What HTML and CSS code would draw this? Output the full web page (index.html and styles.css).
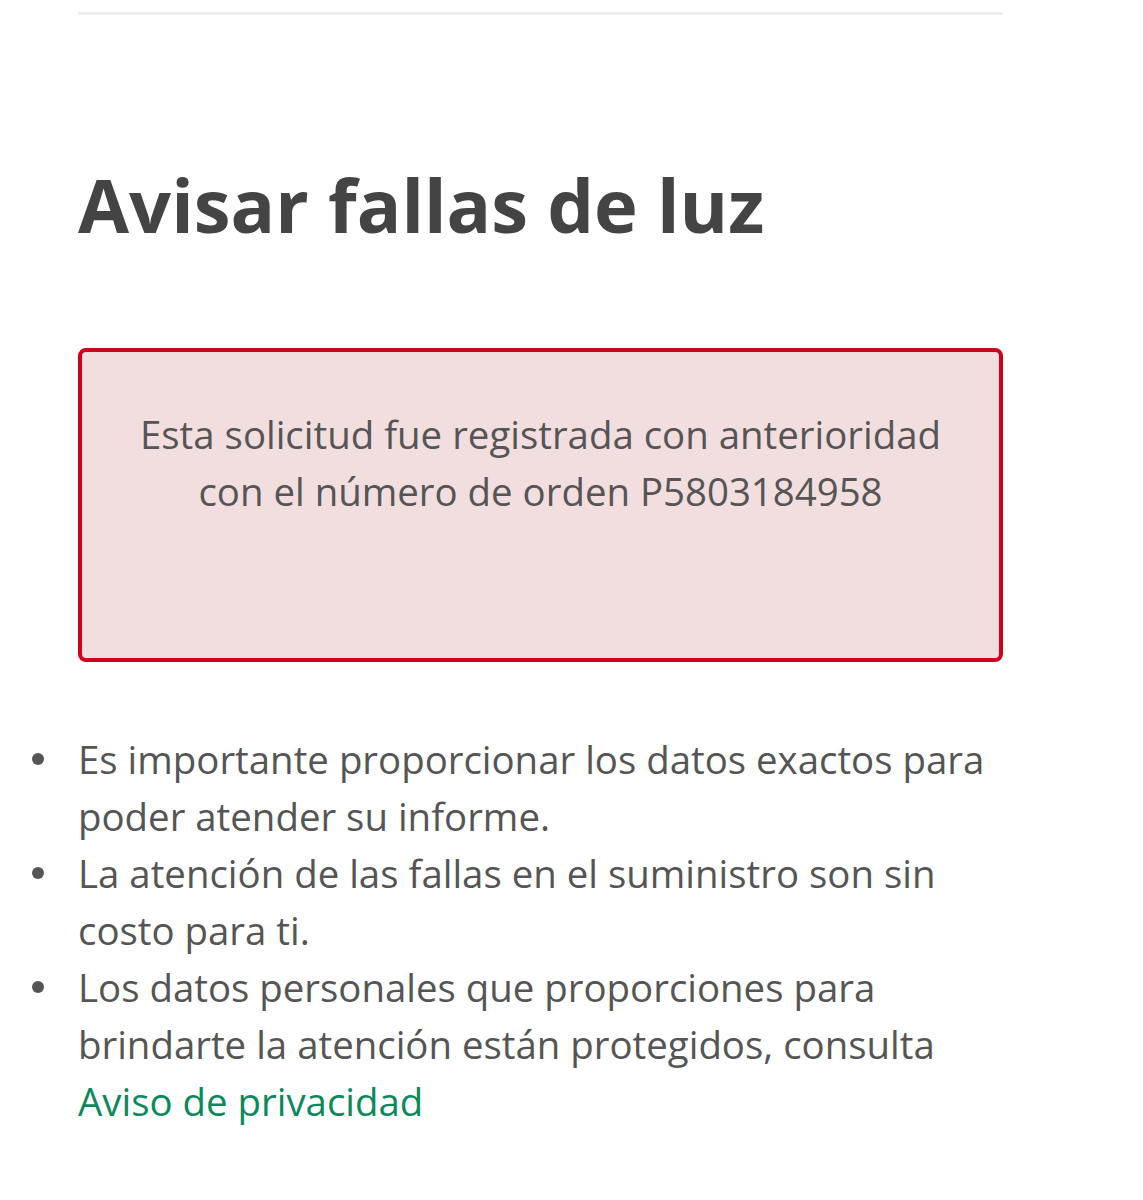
FILE: index.html
```html
<!DOCTYPE html>
<html lang="es">
<head>
<meta charset="utf-8">
<title>Avisar fallas de luz</title>
<link rel="stylesheet" href="styles.css">
</head>
<body>
<main class="page">
  <hr class="top-rule">
  <h1 class="title">Avisar fallas de luz</h1>
  <div class="alert">
    <p class="alert-text">Esta solicitud fue registrada con anterioridad<br>con el número de orden P5803184958</p>
  </div>
  <ul class="notes">
    <li>Es importante proporcionar los datos exactos para poder atender su informe.</li>
    <li>La atención de las fallas en el suministro son sin costo para ti.</li>
    <li>Los datos personales que proporciones para brindarte la atención están protegidos, consulta <a class="link" href="#">Aviso de privacidad</a></li>
  </ul>
</main>
</body>
</html>
```

FILE: styles.css
```css
html, body {
  margin: 0;
  padding: 0;
  background: #ffffff;
}

body {
  font-family: "Open Sans", "Noto Sans", sans-serif;
  color: #555555;
}

.page {
  width: 925px;
  margin-left: 78px;
  padding-top: 12px;
}

.top-rule {
  margin: 0;
  border: 0;
  border-top: 3px solid #eeeeee;
}

.title {
  margin: 143px 0 0 0;
  font-size: 74px;
  font-weight: 700;
  line-height: 94px;
  color: #444444;
}

.alert {
  margin-top: 96px;
  height: 306px;
  box-sizing: content-box;
  border: 4px solid #d0021b;
  border-radius: 8px;
  background: #f2dede;
}

.alert-text {
  margin: 54px 0 0 0;
  text-align: center;
  font-size: 38.4px;
  line-height: 57px;
  color: #555555;
}

.notes {
  margin: 69px 0 0 0;
  padding: 0;
  list-style: none;
  font-size: 38.4px;
  line-height: 57px;
  color: #555555;
}

.notes li {
  position: relative;
  margin: 0;
}

.notes li::before {
  content: "";
  position: absolute;
  left: -46px;
  top: 22px;
  width: 12px;
  height: 12px;
  border-radius: 50%;
  background: #555555;
}

.link {
  color: #0a8a5c;
  text-decoration: none;
}
```
